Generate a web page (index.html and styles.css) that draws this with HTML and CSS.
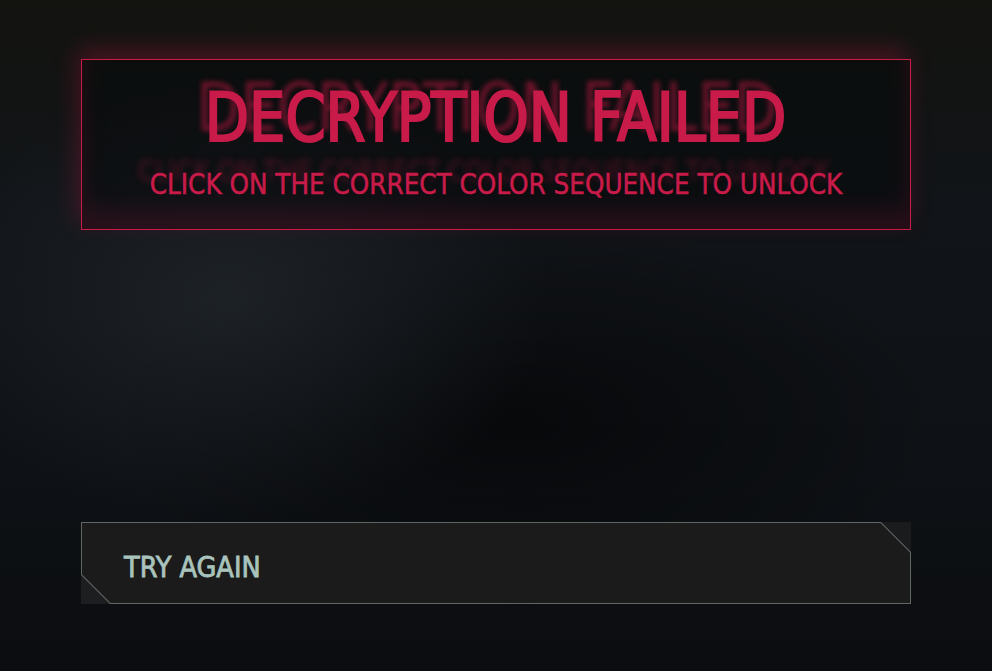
FILE: index.html
```html
<!DOCTYPE html>
<html lang="en">
<head>
  <meta charset="UTF-8" />
  <meta name="viewport" content="width=device-width, initial-scale=1" />
  <title>Decryption Failed</title>
  <link rel="stylesheet" href="styles.css">
</head>
<body>
  <div class="screen">
    <div class="alert">
      <h1 class="alert-title"><span>DECRYPTION FAILED</span></h1>
      <p class="alert-sub"><span>CLICK ON THE CORRECT COLOR SEQUENCE TO UNLOCK</span></p>
    </div>

    <div class="spacer"></div>

    <div class="retry-wrap">
      <button class="retry" type="button">
        <span class="retry-label">TRY AGAIN</span>
      </button>
    </div>
  </div>
</body>
</html>
```

FILE: styles.css
```css
* {
  box-sizing: border-box;
}
html, body {
  height: 100%;
}
body {
  margin: 0;
  font-family: 'DejaVu Sans Condensed', 'Liberation Sans', sans-serif;
  background:
    radial-gradient(ellipse 320px 220px at 230px 300px, rgba(40, 46, 52, 0.55), transparent),
    radial-gradient(ellipse 420px 200px at 520px 420px, rgba(0, 0, 0, 0.5), transparent),
    linear-gradient(180deg, #131410 0%, #111418 30%, #0e1115 70%, #0b0d10 100%);
  overflow: hidden;
}
.screen {
  width: 830px;
  margin: 0 auto;
  padding-top: 59px;
  display: flex;
  flex-direction: column;
}
.alert {
  height: 171px;
  border: 1px solid #c81b48;
  background: rgba(5, 6, 8, 0.45);
  box-shadow: -4px -10px 22px rgba(200, 20, 70, 0.28), inset 0 -18px 24px rgba(200, 20, 70, 0.16);
  text-align: center;
  padding-top: 18px;
}
.alert-title,
.alert-sub {
  margin: 0;
  color: #c81b4a;
}
.alert-title span,
.alert-sub span {
  display: inline-block;
  white-space: nowrap;
}
.alert-title {
  font-size: 67px;
  line-height: 80px;
  font-weight: 400;
}
.alert-title span {
  -webkit-text-stroke: 2.2px #c81b4a;
  transform: scaleX(0.955);
  text-shadow: -9px -10px 5px rgba(200, 25, 70, 0.5);
}
.alert-sub {
  margin-top: 10px;
  font-size: 27.5px;
  line-height: 32px;
}
.alert-sub span {
  -webkit-text-stroke: 0.5px #c81b4a;
  text-shadow: -12px -13px 6px rgba(200, 25, 70, 0.35);
}
.spacer {
  height: 292px;
}
.retry-wrap {
  background: linear-gradient(90deg, #1c1e1f, #191b1c);
}
.retry {
  position: relative;
  display: flex;
  align-items: center;
  height: 82px;
  width: 100%;
  padding: 8px 0 0 43px;
  border: none;
  background: #5e6764;
  clip-path: polygon(0 0, calc(100% - 30px) 0, 100% 30px, 100% 100%, 29px 100%, 0 calc(100% - 29px));
  cursor: pointer;
  font-family: inherit;
}
.retry::before {
  content: "";
  position: absolute;
  inset: 1px;
  background: #1b1b1b;
  clip-path: polygon(0 0, calc(100% - 29.5px) 0, 100% 29.5px, 100% 100%, 28.5px 100%, 0 calc(100% - 28.5px));
}
.retry-label {
  position: relative;
  display: inline-block;
  font-size: 28.5px;
  font-weight: 400;
  color: #a9c3bd;
  -webkit-text-stroke: 0.8px #a9c3bd;
}
```
